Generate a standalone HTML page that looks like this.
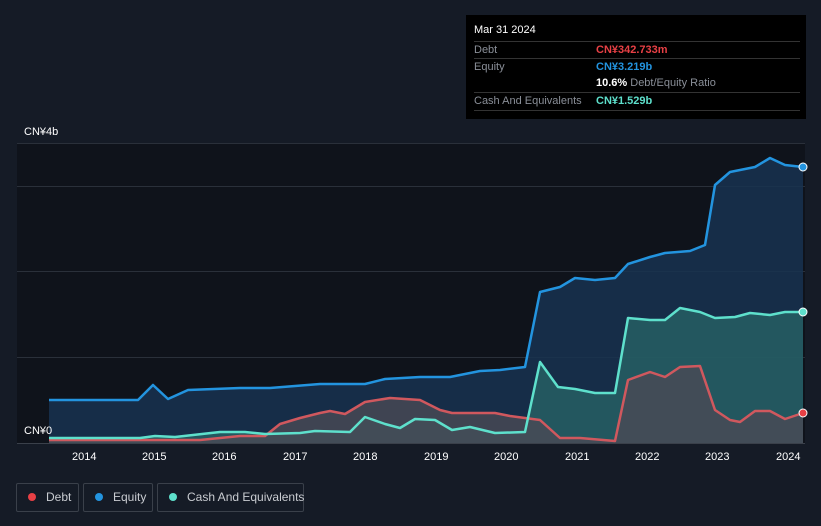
<!DOCTYPE html><html><head><style>
html,body{margin:0;width:821px;height:526px;overflow:hidden}
body{background:#151b26;font-family:"Liberation Sans",sans-serif;position:relative}
.t{position:absolute;font-size:11px;color:#fff}
.tip{position:absolute;left:466px;top:15px;width:340px;height:104px;background:#000;font-size:11px}
.row{position:absolute;left:8px;width:326px;border-top:1px solid #333;height:17px;line-height:17px;color:#8a8f98}
.v{position:absolute;left:122px;font-weight:bold}
.leg{position:absolute;top:483px;height:29px;box-sizing:border-box;border:1px solid #3a404a;border-radius:2px;color:#c9ccd1;font-size:12px;line-height:27px;white-space:nowrap}
.dot{display:inline-block;width:8px;height:8px;border-radius:50%;margin:0 10px 0 11px}
</style></head><body>
<svg width="821" height="526" style="position:absolute;left:0;top:0">
<rect x="17" y="143" width="788" height="300" fill="#0f131b"/>
<g stroke="#2a303a" stroke-width="1"><line x1="17" y1="143.5" x2="805" y2="143.5"/><line x1="17" y1="186.5" x2="805" y2="186.5"/><line x1="17" y1="271.5" x2="805" y2="271.5"/><line x1="17" y1="357.5" x2="805" y2="357.5"/></g>
<path d="M49,400 L138,400 L153,385 L168,399 L188,390 L240,388 L270,388 L320,384 L365,384 L385,379 L420,377 L450,377 L480,371 L500,370 L525,367 L540,292 L560,287 L575,278 L595,280 L615,278 L628,264 L650,257 L665,253 L690,251 L705,245 L715,185 L730,172 L755,167 L770,158 L785,165 L803,167 L803,443 L49,443Z" fill="#173350" fill-opacity=".85"/>
<path d="M49,438 L140,438 L155,436 L175,437 L220,432 L245,432 L265,434 L300,433 L315,431 L350,432 L365,417 L385,424 L400,428 L415,419 L435,420 L452,430 L470,427 L495,433 L525,432 L540,362 L558,387 L575,389 L595,393 L615,393 L628,318 L650,320 L665,320 L680,308 L700,312 L715,318 L735,317 L750,313 L770,315 L785,312 L803,312 L803,443 L49,443Z" fill="#2a6a6a" fill-opacity=".7"/>
<path d="M49,440 L200,440 L240,436 L265,436 L280,424 L300,418 L320,413 L330,411 L345,414 L365,402 L390,398 L420,400 L440,410 L452,413 L495,413 L510,416 L540,420 L560,438 L580,438 L615,441 L628,380 L650,372 L665,377 L680,367 L700,366 L715,410 L730,420 L740,422 L755,411 L770,411 L785,419 L803,413 L803,443 L49,443Z" fill="#4a4a55" fill-opacity=".8"/>
<g fill="none" stroke-width="2.5" stroke-linejoin="round">
<path d="M49,400 L138,400 L153,385 L168,399 L188,390 L240,388 L270,388 L320,384 L365,384 L385,379 L420,377 L450,377 L480,371 L500,370 L525,367 L540,292 L560,287 L575,278 L595,280 L615,278 L628,264 L650,257 L665,253 L690,251 L705,245 L715,185 L730,172 L755,167 L770,158 L785,165 L803,167" stroke="#2394df"/>
<path d="M49,440 L200,440 L240,436 L265,436 L280,424 L300,418 L320,413 L330,411 L345,414 L365,402 L390,398 L420,400 L440,410 L452,413 L495,413 L510,416 L540,420 L560,438 L580,438 L615,441 L628,380 L650,372 L665,377 L680,367 L700,366 L715,410 L730,420 L740,422 L755,411 L770,411 L785,419 L803,413" stroke="#d0585e"/>
<path d="M49,438 L140,438 L155,436 L175,437 L220,432 L245,432 L265,434 L300,433 L315,431 L350,432 L365,417 L385,424 L400,428 L415,419 L435,420 L452,430 L470,427 L495,433 L525,432 L540,362 L558,387 L575,389 L595,393 L615,393 L628,318 L650,320 L665,320 L680,308 L700,312 L715,318 L735,317 L750,313 L770,315 L785,312 L803,312" stroke="#5ee0cc"/>
</g>
<line x1="17" y1="443.5" x2="805" y2="443.5" stroke="#3a404a"/>
<circle cx="803" cy="167" r="4" fill="#2394df" stroke="#fff"/><circle cx="803" cy="312" r="4" fill="#5ee0cc" stroke="#fff"/><circle cx="803" cy="413" r="4" fill="#e84045" stroke="#fff"/>
</svg>
<div class="t" style="left:24px;top:126px">CN¥4b</div>
<div class="t" style="left:24px;top:425px">CN¥0</div>
<div class="t" style="left:72px;top:451px">2014</div><div class="t" style="left:142px;top:451px">2015</div><div class="t" style="left:212px;top:451px">2016</div><div class="t" style="left:283px;top:451px">2017</div><div class="t" style="left:353px;top:451px">2018</div><div class="t" style="left:424px;top:451px">2019</div><div class="t" style="left:494px;top:451px">2020</div><div class="t" style="left:565px;top:451px">2021</div><div class="t" style="left:635px;top:451px">2022</div><div class="t" style="left:705px;top:451px">2023</div><div class="t" style="left:776px;top:451px">2024</div>
<div class="tip">
<div style="position:absolute;left:8px;top:9px;color:#fff">Mar 31 2024</div>
<div class="row" style="top:26px">Debt<span class="v" style="color:#e84045">CN¥342.733m</span></div>
<div class="row" style="top:43px">Equity<span class="v" style="color:#2394df">CN¥3.219b</span></div>
<div class="row" style="top:60px;border:0"><span class="v" style="color:#fff">10.6% <span style="font-weight:normal;color:#8a8f98">Debt/Equity Ratio</span></span></div>
<div class="row" style="top:77px">Cash And Equivalents<span class="v" style="color:#5ee0cc">CN¥1.529b</span></div>
<div class="row" style="top:95px;height:0"></div>
</div>
<div class="leg" style="left:16px;width:63px"><span class="dot" style="background:#e84045"></span>Debt</div>
<div class="leg" style="left:83px;width:70px"><span class="dot" style="background:#2394df"></span>Equity</div>
<div class="leg" style="left:157px;width:147px"><span class="dot" style="background:#5ee0cc"></span>Cash And Equivalents</div>
</body></html>
